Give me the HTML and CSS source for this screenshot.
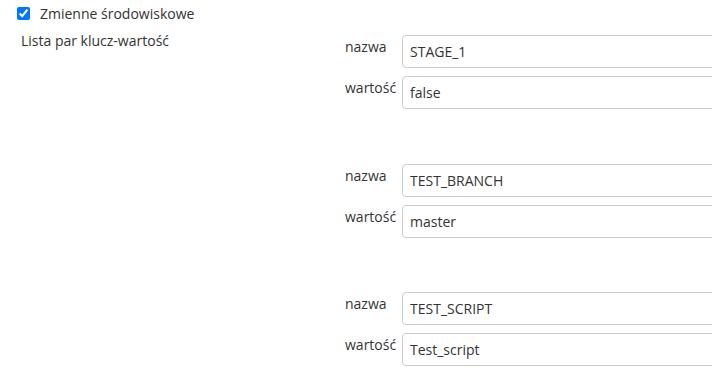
FILE: index.html
```html
<!DOCTYPE html>
<html lang="pl">
<head>
  <meta charset="UTF-8" />
  <title>Zmienne środowiskowe</title>
  <link rel="stylesheet" href="styles.css">
</head>
<body>
  <div class="block">
    <label class="check-row">
      <input type="checkbox" checked />
      <span>Zmienne środowiskowe</span>
    </label>

    <div class="env-section">
      <div class="section-label">Lista par klucz-wartość</div>
      <div class="pairs">
        <div class="pair">
          <div class="field">
            <label>nazwa</label>
            <input type="text" value="STAGE_1" />
          </div>
          <div class="field">
            <label>wartość</label>
            <input type="text" value="false" />
          </div>
        </div>

        <div class="pair">
          <div class="field">
            <label>nazwa</label>
            <input type="text" value="TEST_BRANCH" />
          </div>
          <div class="field">
            <label>wartość</label>
            <input type="text" value="master" />
          </div>
        </div>

        <div class="pair">
          <div class="field">
            <label>nazwa</label>
            <input type="text" value="TEST_SCRIPT" />
          </div>
          <div class="field">
            <label>wartość</label>
            <input type="text" value="Test_script" />
          </div>
        </div>
      </div>
    </div>
  </div>
</body>
</html>
```

FILE: styles.css
```css
* { box-sizing: border-box; }
body {
  margin: 0;
  font-family: "Open Sans", sans-serif;
  font-size: 14px;
  line-height: 19px;
  color: #333;
  background: #fff;
}
.block {
  width: 100%;
  overflow: hidden;
  padding: 4px 0 0 13px;
}
.check-row {
  display: flex;
  align-items: center;
  gap: 10px;
}
.check-row input {
  width: 13px;
  height: 13px;
  margin: 0 0 0 4px;
}
.env-section {
  display: flex;
  margin-top: 8px;
}
.section-label {
  width: 332px;
  padding-left: 8px;
}
.pairs {
  flex: 1;
  display: flex;
  flex-direction: column;
  gap: 54.5px;
  padding-top: 4px;
  margin-right: -20px;
}
.pair {
  display: flex;
  flex-direction: column;
  gap: 8px;
}
.field {
  display: flex;
  align-items: flex-start;
}
.field label {
  width: 57px;
  padding-top: 2px;
}
.field input {
  flex: 1;
  min-width: 0;
  height: 33px;
  padding: 0 7px;
  border: 1px solid #ccc;
  border-radius: 4px;
  font-family: inherit;
  font-size: 14px;
  color: #333;
}
```
